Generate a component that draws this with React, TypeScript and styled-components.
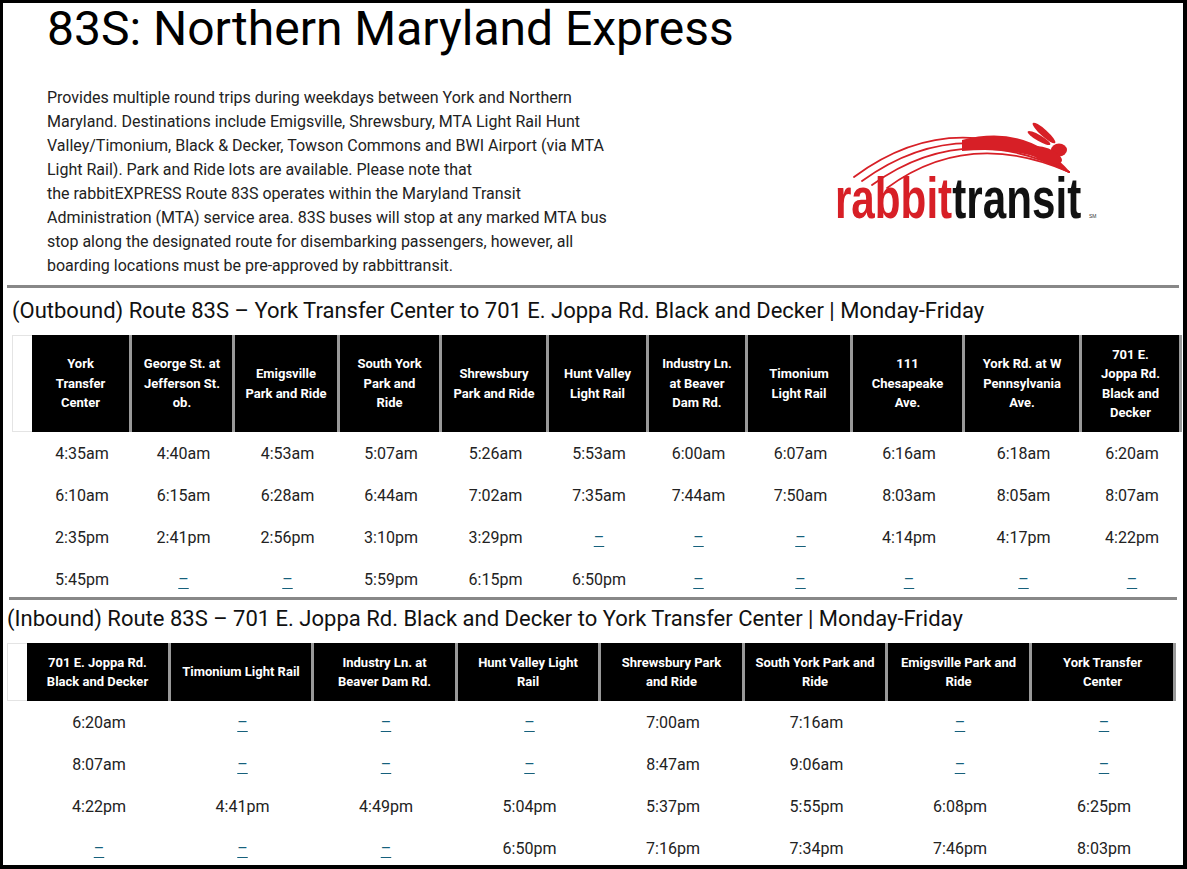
import React, { FC } from 'react';
import styled, { createGlobalStyle } from 'styled-components';

const GlobalStyle = createGlobalStyle`
  html, body {
    margin: 0;
    padding: 0;
    background: #fff;
  }
  body {
    font-family: Roboto, 'Liberation Sans', Arial, sans-serif;
    color: #222;
  }
`;

const DASH = '–';

const outboundHeaders = [
  ['York', 'Transfer', 'Center'],
  ['George St. at', 'Jefferson St.', 'ob.'],
  ['Emigsville', 'Park and Ride'],
  ['South York', 'Park and', 'Ride'],
  ['Shrewsbury', 'Park and Ride'],
  ['Hunt Valley', 'Light Rail'],
  ['Industry Ln.', 'at Beaver', 'Dam Rd.'],
  ['Timonium', 'Light Rail'],
  ['111', 'Chesapeake', 'Ave.'],
  ['York Rd. at W', 'Pennsylvania', 'Ave.'],
  ['701 E.', 'Joppa Rd.', 'Black and', 'Decker']
];

const outboundRows = [
  ['4:35am', '4:40am', '4:53am', '5:07am', '5:26am', '5:53am', '6:00am', '6:07am', '6:16am', '6:18am', '6:20am'],
  ['6:10am', '6:15am', '6:28am', '6:44am', '7:02am', '7:35am', '7:44am', '7:50am', '8:03am', '8:05am', '8:07am'],
  ['2:35pm', '2:41pm', '2:56pm', '3:10pm', '3:29pm', DASH, DASH, DASH, '4:14pm', '4:17pm', '4:22pm'],
  ['5:45pm', DASH, DASH, '5:59pm', '6:15pm', '6:50pm', DASH, DASH, DASH, DASH, DASH]
];

const inboundHeaders = [
  ['701 E. Joppa Rd.', 'Black and Decker'],
  ['Timonium Light Rail'],
  ['Industry Ln. at', 'Beaver Dam Rd.'],
  ['Hunt Valley Light', 'Rail'],
  ['Shrewsbury Park', 'and Ride'],
  ['South York Park and', 'Ride'],
  ['Emigsville Park and', 'Ride'],
  ['York Transfer', 'Center']
];

const inboundRows = [
  ['6:20am', DASH, DASH, DASH, '7:00am', '7:16am', DASH, DASH],
  ['8:07am', DASH, DASH, DASH, '8:47am', '9:06am', DASH, DASH],
  ['4:22pm', '4:41pm', '4:49pm', '5:04pm', '5:37pm', '5:55pm', '6:08pm', '6:25pm'],
  [DASH, DASH, DASH, '6:50pm', '7:16pm', '7:34pm', '7:46pm', '8:03pm']
];

const outboundWidths = [20, 100, 103, 105, 102, 107, 100, 99, 105, 112, 117, 100];
const inboundWidths = [20, 144, 143, 144, 143, 144, 143, 144, 144];

const Frame = styled.div`
  box-sizing: border-box;
  width: 1187px;
  height: 869px;
  overflow: hidden;
  border: 3px solid #000;
  border-right-width: 4px;
  border-bottom-width: 4px;
`;

const Title = styled.h1`
  margin: -3px 0 0 44px;
  font-size: 48px;
  line-height: 57px;
  font-weight: 400;
  color: #000;
`;

const Intro = styled.div`
  display: flex;
  align-items: flex-start;
  margin-top: 29px;
`;

const Description = styled.p`
  margin: 0 0 0 44px;
  width: 572px;
  font-size: 16px;
  line-height: 24px;
  color: #222;
`;

const LogoBox = styled.div`
  margin: 29px 0 0 213px;
`;

const Rule = styled.div<{ $left: number; $right: number; $top: number }>`
  position: relative;
  height: 3px;
  background: #888;
  margin: ${p => p.$top}px ${p => p.$right}px 0 ${p => p.$left}px;
`;

const Section = styled.section<{ $indent: number }>`
  padding-left: ${p => p.$indent}px;
`;

const Heading = styled.h2<{ $top: number }>`
  margin: ${p => p.$top}px 0 12px;
  font-size: 22px;
  line-height: 24px;
  font-weight: 400;
  color: #111;
  white-space: nowrap;
`;

const Table = styled.table`
  border-collapse: separate;
  border-spacing: 0;
  table-layout: fixed;
`;

const Col = styled.col<{ $w: number }>`
  width: ${p => p.$w}px;
`;

const HeadCell = styled.th`
  background: #000;
  color: #fff;
  font-size: 13px;
  font-weight: 700;
  line-height: 19.5px;
  padding: 9.5px 4px;
  text-align: center;
  vertical-align: middle;
  white-space: nowrap;
  border-right: 3px solid #999;
`;

const BlankHead = styled.th`
  background: #fff;
  border: 1px solid #e4e4e4;
  border-right: none;
  padding: 0;
`;

const Cell = styled.td<{ $h: number }>`
  height: ${p => p.$h}px;
  padding: 0;
  font-size: 16px;
  color: #222;
  text-align: center;
  vertical-align: middle;
`;

const DashLink = styled.a`
  color: #16607c;
  text-decoration: underline;
  text-underline-offset: 3px;
`;

const RabbitLogo: FC = () => (
  <svg width='270' height='112' viewBox='0 0 270 112'>
    <g fill='none' stroke='#d71f26' strokeLinecap='round'>
      <path d='M22 62 Q125 -14 237 57' strokeWidth='1.8' />
      <path d='M30 66 Q128 -5 237 57' strokeWidth='1.8' />
      <path d='M40 70 Q131 4 237 57' strokeWidth='1.8' />
      <path d='M55 73 Q136 13 237 57' strokeWidth='1.6' />
    </g>
    <path d='M130 25 Q195 8 238 57 Q195 30 130 36 Z' fill='#d71f26' />
    <g fill='#d71f26'>
      <ellipse cx='212' cy='18' rx='15' ry='3.4' transform='rotate(42 212 18)' />
      <ellipse cx='207' cy='23' rx='13' ry='3' transform='rotate(30 207 23)' />
      <ellipse cx='227' cy='35' rx='8' ry='6.5' />
      <ellipse cx='214' cy='40' rx='17' ry='7' transform='rotate(22 214 40)' />
    </g>
    <text
      x='4'
      y='103'
      transform='scale(0.728 1)'
      fontFamily="'Liberation Sans', Arial, sans-serif"
      fontWeight='700'
      fontSize='58'
    >
      <tspan fill='#d71f26'>rabbit</tspan>
      <tspan fill='#111'>transit</tspan>
    </text>
    <text x='257' y='103' fontFamily="'Liberation Sans', Arial, sans-serif" fontSize='5' fill='#333'>
      SM
    </text>
  </svg>
);

const Schedule: FC<{ headers: string[][]; rows: string[][]; widths: number[]; rowHeight: number }> = ({
  headers,
  rows,
  widths,
  rowHeight
}) => (
  <Table style={{ width: widths.reduce((a, b) => a + b, 0) }}>
    <colgroup>
      {widths.map((w, i) => (
        <Col key={i} $w={w} />
      ))}
    </colgroup>
    <thead>
      <tr>
        <BlankHead />
        {headers.map((lines, i) => (
          <HeadCell key={i}>
            {lines.map((l, j) => (
              <React.Fragment key={j}>
                {j > 0 && <br />}
                {l}
              </React.Fragment>
            ))}
          </HeadCell>
        ))}
      </tr>
    </thead>
    <tbody>
      {rows.map((row, r) => (
        <tr key={r}>
          <Cell $h={rowHeight} />
          {row.map((v, c) => (
            <Cell key={c} $h={rowHeight}>
              {v === DASH ? <DashLink href='#'>{DASH}</DashLink> : v}
            </Cell>
          ))}
        </tr>
      ))}
    </tbody>
  </Table>
);

const App: FC = () => (
  <>
    <GlobalStyle />
    <Frame>
      <Title>83S: Northern Maryland Express</Title>
      <Intro>
        <Description>
          Provides multiple round trips during weekdays between York and Northern Maryland. Destinations include
          Emigsville, Shrewsbury, MTA Light Rail Hunt Valley/Timonium, Black &amp; Decker, Towson Commons and BWI
          Airport (via MTA Light Rail). Park and Ride lots are available. Please note that
          <br />
          the rabbitEXPRESS Route 83S operates within the Maryland Transit Administration (MTA) service area. 83S buses
          will stop at any marked MTA bus stop along the designated route for disembarking passengers, however, all
          boarding locations must be pre-approved by rabbittransit.
        </Description>
        <LogoBox>
          <RabbitLogo />
        </LogoBox>
      </Intro>
      <Rule $left={4} $right={4} $top={7} />
      <Section $indent={9}>
        <Heading $top={11}>
          (Outbound) Route 83S – York Transfer Center to 701 E. Joppa Rd. Black and Decker | Monday-Friday
        </Heading>
        <Schedule headers={outboundHeaders} rows={outboundRows} widths={outboundWidths} rowHeight={42} />
      </Section>
      <Rule $left={6} $right={6} $top={-3} />
      <Section $indent={4}>
        <Heading $top={7}>
          (Inbound) Route 83S – 701 E. Joppa Rd. Black and Decker to York Transfer Center | Monday-Friday
        </Heading>
        <Schedule headers={inboundHeaders} rows={inboundRows} widths={inboundWidths} rowHeight={42} />
      </Section>
    </Frame>
  </>
);

export default App;
